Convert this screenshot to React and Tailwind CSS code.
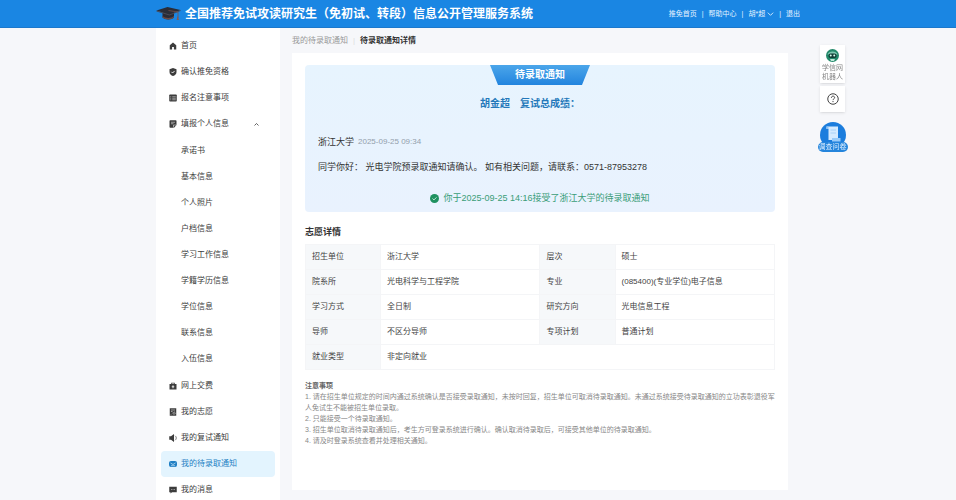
import React from "react";

const icons = {
  home: <path d="M8 1 1.5 6.5V15h4.7V9.8h3.6V15h4.7V6.5Z" />,
  shield: (
    <>
      <path d="M8 0 1 2.6V8c0 4 3 6.8 7 8 4-1.200 7-4 7-8V2.600Z" />
      <path d="m4.800 7.600 2.400 2.400 4-4.200" fill="none" stroke="#fff" strokeWidth="1.800" />
    </>
  ),
  list: (
    <>
      <rect x="0.500" y="1" width="15" height="14" rx="1.500" />
      <path d="M2.500 5.500h2M6.500 5.500h7M2.500 8.500h2M6.500 8.500h7M2.500 11.500h2M6.500 11.500h7" stroke="#fff" strokeWidth="1" />
    </>
  ),
  form: (
    <>
      <path d="M2.500 0.500h11A1.500 1.500 0 0 1 15 2v8l-5 5.500H2.500A1.500 1.500 0 0 1 1 14V2A1.500 1.500 0 0 1 2.500 0.500Z" />
      <path d="M4 4.500h8M4 7.500h5M9 15v-5h6" fill="none" stroke="#fff" strokeWidth="1" />
    </>
  ),
  bag: (
    <>
      <path d="M4.500 4V1.500h7V4H15v11H1V4Zm1.500 0h4V3H6Z" fillRule="evenodd" />
      <path d="M8 6.500v6M5.500 9.500h5" stroke="#fff" strokeWidth="1.600" />
    </>
  ),
  wish: (
    <>
      <path d="M1.500 0.500h13v15h-13Z" />
      <path d="M4 4h8M4 7h3M4 13l1.500-1.500M10 7.500l2.800 2.500L10 13 7.500 10Z" fill="none" stroke="#fff" strokeWidth="1" />
    </>
  ),
  horn: (
    <>
      <path d="M0.500 4.500H4l6-4.500v16L4 11.500H0.500Z" />
      <path d="M12 3.500c3.500 2 3.500 7 0 9" fill="none" stroke="currentColor" strokeWidth="1.300" />
    </>
  ),
  mail: (
    <>
      <rect x="0" y="2" width="16" height="12" rx="4" />
      <path d="m3 6 5 3 5-3M4 11.500h8" fill="none" stroke="#e3f4fe" strokeWidth="1.300" />
    </>
  ),
  message: (
    <>
      <path d="M0.500 1.500h15v11H6L3 15v-2.500H0.500Z" />
      <path d="M4 7h1.500M7.300 7h1.500M10.500 7H12" stroke="#fff" strokeWidth="1.200" />
    </>
  ),
};

function Icon({ name }) {
  return (
    <svg viewBox="0 0 16 16" className="h-2 w-2 shrink-0" fill="currentColor" aria-hidden="true">
      {icons[name]}
    </svg>
  );
}

const menu = [
  { icon: "home", label: "首页" },
  { icon: "shield", label: "确认推免资格" },
  { icon: "list", label: "报名注意事项" },
  {
    icon: "form",
    label: "填报个人信息",
    children: [
      "承诺书",
      "基本信息",
      "个人照片",
      "户档信息",
      "学习工作信息",
      "学籍学历信息",
      "学位信息",
      "联系信息",
      "入伍信息",
    ],
  },
  { icon: "bag", label: "网上交费" },
  { icon: "wish", label: "我的志愿" },
  { icon: "horn", label: "我的复试通知" },
  { icon: "mail", label: "我的待录取通知", active: true },
  { icon: "message", label: "我的消息" },
];

const details = [
  ["招生单位", "浙江大学", "层次", "硕士"],
  ["院系所", "光电科学与工程学院", "专业", "(085400)(专业学位)电子信息"],
  ["学习方式", "全日制", "研究方向", "光电信息工程"],
  ["导师", "不区分导师", "专项计划", "普通计划"],
  ["就业类型", "非定向就业"],
];

const notes = [
  "1. 请在招生单位规定的时间内通过系统确认是否接受录取通知，未按时回复，招生单位可取消待录取通知。未通过系统接受待录取通知的立功表彰退役军人免试生不能被招生单位录取。",
  "2. 只能接受一个待录取通知。",
  "3. 招生单位取消待录取通知后，考生方可登录系统进行确认。确认取消待录取后，可接受其他单位的待录取通知。",
  "4. 请及时登录系统查看并处理相关通知。",
];

function Header() {
  return (
    <header className="h-7 shrink-0 border-b border-[#1c78cc] bg-[#1a86e3] text-white">
      <div className="mx-auto flex h-full max-w-[644px] items-center justify-between">
        <div className="flex items-center gap-1">
          <svg viewBox="0 0 50 30" className="h-[15px] w-[25px]" aria-hidden="true">
            <path d="M13 13v10c5 5 18 5 23 0V13Z" fill="#2b2b35" />
            <path d="M13 20c5 5 18 5 23 0v3c-5 5-18 5-23 0Z" fill="#6b4a45" />
            <path d="M1 9 23 2l26 6-22 10Z" fill="#2a2d38" />
            <path d="m1 9 26 8 22-9v2L27 19 1 11Z" fill="#494b58" />
            <path d="M25 9 44 12v12" fill="none" stroke="#7a5148" strokeWidth="1.500" />
            <path d="m43 21-2 7h5l-2-7Z" fill="#8a5a4c" />
          </svg>
          <h1 className="text-[12px] leading-4 font-bold">
            全国推荐免试攻读研究生（免初试、转段）信息公开管理服务系统
          </h1>
        </div>
        <nav className="flex items-center gap-[5px] text-[7px] leading-3 text-[#e4f2ff]">
          <a href="#home">推免首页</a>
          <span>|</span>
          <a href="#help">帮助中心</a>
          <span>|</span>
          <button type="button" className="flex items-center gap-0.5">
            胡*超
            <svg viewBox="0 0 10 6" className="h-1 w-[7px]" fill="none" stroke="currentColor" strokeWidth="1.300" aria-hidden="true">
              <path d="m1 1 4 4 4-4" />
            </svg>
          </button>
          <span>|</span>
          <a href="#logout">退出</a>
        </nav>
      </div>
    </header>
  );
}

function Sidebar() {
  return (
    <aside className="w-[124px] shrink-0 bg-white px-[5px] pt-[5px]">
      <ul className="text-[8px] text-[#3c3c3c]">
        {menu.map((item) => (
          <li key={item.label}>
            {item.children ? (
              <>
                <button type="button" aria-expanded="true" className="flex h-[26px] w-full items-center gap-1 px-2">
                  <Icon name={item.icon} />
                  {item.label}
                  <svg viewBox="0 0 10 6" className="mr-2 ml-auto h-[3px] w-[5px]" fill="none" stroke="currentColor" strokeWidth="1.600" aria-hidden="true">
                    <path d="m1 5 4-4 4 4" />
                  </svg>
                </button>
                <ul className="py-px">
                  {item.children.map((child) => (
                    <li key={child}>
                      <a href="#info" className="flex h-[26px] items-center pl-5">
                        {child}
                      </a>
                    </li>
                  ))}
                </ul>
              </>
            ) : (
              <a
                href="#menu"
                className={
                  item.active
                    ? "flex h-[26px] items-center gap-1 rounded-sm bg-[#e3f4fe] px-2 text-[#1f7fc4]"
                    : "flex h-[26px] items-center gap-1 px-2"
                }
              >
                <Icon name={item.icon} />
                {item.label}
              </a>
            )}
          </li>
        ))}
      </ul>
    </aside>
  );
}

function Notice() {
  return (
    <section className="rounded-sm bg-linear-to-b from-[#e7f4fe] to-[#e9f2fe] px-[13px] pb-1.5 text-[9px] leading-4">
      <h2 className="mx-auto h-5 w-[100px] bg-linear-to-b from-[#4ba6ea] to-[#2184de] text-center text-[10px] leading-5 font-bold text-white [clip-path:polygon(0_0,100%_0,92%_100%,8%_100%)]">
        待录取通知
      </h2>
      <p className="mt-[11px] flex justify-center gap-2.5 pr-5 text-[10px] font-bold text-[#2478ba]">
        <span>胡金超</span>
        <span>复试总成绩：</span>
      </p>
      <p className="mt-[22px] flex gap-1 text-[#333]">
        浙江大学<time className="text-[8px] text-[#93a0ac]">2025-09-25 09:34</time>
      </p>
      <p className="mt-[9px] text-[#333]">
        同学你好： 光电学院预录取通知请确认。 如有相关问题，请联系：0571-87953278
      </p>
      <p className="mt-[15px] flex items-center justify-center gap-1 text-[#3a9d78]">
        <svg viewBox="0 0 16 16" className="h-[9px] w-[9px]" aria-hidden="true">
          <circle cx="8" cy="8" r="8" fill="#1f9160" />
          <path d="m4.500 8 2.500 2.500 4.500-4.500" fill="none" stroke="#d9f2e7" strokeWidth="1.600" />
        </svg>
        你于2025-09-25 14:16接受了浙江大学的待录取通知
      </p>
    </section>
  );
}

function Details() {
  return (
    <table className="mt-1 w-full table-fixed border-collapse text-left text-[8px] leading-4 text-[#444]">
      <colgroup>
        <col className="w-[16%]" />
        <col className="w-[34%]" />
        <col className="w-[16%]" />
        <col className="w-[34%]" />
      </colgroup>
      <tbody>
        {details.map(([label, value, label2, value2]) => (
          <tr key={label} className="h-[25px]">
            <th scope="row" className="border border-[#f4f5f7] bg-[#f6f8fa] px-1.5 font-normal">{label}</th>
            <td colSpan={label2 ? 1 : 3} className="border border-[#f4f5f7] px-1.5">{value}</td>
            {label2 && (
              <>
                <th scope="row" className="border border-[#f4f5f7] bg-[#f6f8fa] px-1.5 font-normal">{label2}</th>
                <td className="border border-[#f4f5f7] px-1.5">{value2}</td>
              </>
            )}
          </tr>
        ))}
      </tbody>
    </table>
  );
}

function FloatingTools() {
  return (
    <div className="fixed top-[45px] right-[110px] flex w-[27px] flex-col items-center">
      <button type="button" className="flex w-[25px] flex-col items-center bg-white pt-1 pb-0.5 text-[7px] leading-[9px] text-[#888] shadow-sm">
        <svg viewBox="0 0 26 26" className="mb-px h-[13px] w-[13px]" aria-hidden="true">
          <circle cx="13" cy="13" r="13" fill="#23896a" />
          <path d="M3 11C5 3 21 3 23 11Z" fill="#7fc9b2" />
          <rect x="5" y="9" width="16" height="9" rx="4" fill="#123f36" />
          <circle cx="9.500" cy="13" r="2" fill="#d8fff0" />
          <circle cx="16.500" cy="13" r="2" fill="#d8fff0" />
          <path d="M8 20h10l-2 4h-6Z" fill="#bfe8d8" />
        </svg>
        <span>学信网</span>
        <span>机器人</span>
      </button>
      <button type="button" aria-label="帮助" className="mt-[3px] flex h-[26px] w-[25px] items-center justify-center bg-white text-[#444] shadow-sm">
        <svg viewBox="0 0 24 24" className="h-3 w-3" fill="none" stroke="currentColor" strokeWidth="2" aria-hidden="true">
          <circle cx="12" cy="12" r="10.500" />
          <path d="M8.800 9.500c0-4.500 6.500-4 6.500-.3 0 2.500-3.300 2.500-3.300 5M12 16v2.200" />
        </svg>
      </button>
      <button type="button" className="relative mt-[10px] flex h-[30px] w-[30px] flex-col items-center">
        <svg viewBox="0 0 52 52" className="h-[26px] w-[26px]" aria-hidden="true">
          <circle cx="26" cy="26" r="26" fill="#1b7ddd" />
          <path d="M13 9h23v27H17V14h-4Z" fill="#d5ebff" />
          <path d="M13 9h4v5h-4Z" fill="#8fc3f5" />
          <path d="M21 16h11M21 22h11" stroke="#a9d2f8" strokeWidth="2" />
          <path d="M24 32h17v7H24Z" fill="#9accf9" />
        </svg>
        <span className="absolute bottom-0 rounded-full bg-[#2585dc] px-px text-[7px] leading-[10px] whitespace-nowrap text-[#d9edff]">
          调查问卷
        </span>
      </button>
    </div>
  );
}

export default function App() {
  return (
    <div className="flex h-screen flex-col overflow-hidden bg-[#f6f7fa] font-['Liberation_Sans','Noto_Sans_CJK_SC',sans-serif]">
      <Header />
      <div className="mx-auto flex min-h-0 w-full max-w-[644px] flex-1">
        <Sidebar />
        <main className="min-w-0 flex-1 px-3">
          <nav className="flex h-[25px] items-center gap-[5px] text-[8px] leading-4">
            <a href="#notices" className="text-[#999]">我的待录取通知</a>
            <span className="text-[#ddd]">|</span>
            <span className="font-bold text-[#333]">待录取通知详情</span>
          </nav>
          <div className="bg-white px-[13px] pt-3 pb-11">
            <Notice />
            <h2 className="mt-3 text-[9px] leading-4 font-bold text-[#333]">志愿详情</h2>
            <Details />
            <section className="mt-[10px] text-[7px] leading-[11px] text-[#888]">
              <h3 className="font-bold text-[#666]">注意事项</h3>
              {notes.map((note) => (
                <p key={note}>{note}</p>
              ))}
            </section>
          </div>
        </main>
      </div>
      <FloatingTools />
    </div>
  );
}
